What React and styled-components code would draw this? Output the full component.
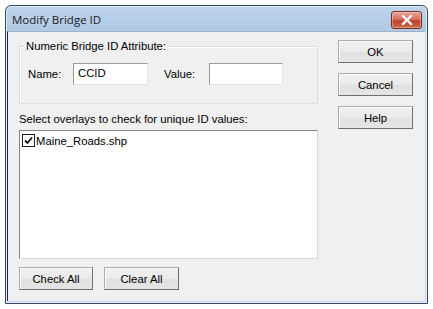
import React from 'react';
import styled, {createGlobalStyle} from 'styled-components';

const GlobalStyle = createGlobalStyle`
  html, body {
    margin: 0;
    padding: 0;
    background: #ffffff;
  }
  body {
    font-family: "Liberation Sans", Arial, sans-serif;
    font-size: 11.3px;
    color: #000;
  }
`;

const Page = styled.div`
  padding: 5px;
`;

const Window = styled.div`
  width: 421px;
  height: 297px;
  border: 1px solid #3a4656;
  border-radius: 6px 6px 0 0;
  background: linear-gradient(to bottom, #bed3ea 0px, #b0c9e4 26px, #c3d8ee 26px, #c3d8ee 100%);
  display: flex;
  flex-direction: column;
  box-shadow: inset 0 0 0 1px #e4eef8;
`;

const TitleBar = styled.div`
  height: 25px;
  display: flex;
  align-items: center;
  justify-content: space-between;
  padding: 0 5px 0 6px;
`;

const Title = styled.span`
  font-family: "Open Sans", "Noto Sans", sans-serif;
  font-size: 11.5px;
  color: #1b1b1b;
  margin-top: 1px;
`;

const CloseButton = styled.div`
  width: 29px;
  height: 16px;
  border: 1px solid #7a2a20;
  border-radius: 3px;
  background: linear-gradient(to bottom, #e6a296 0%, #d7705f 45%, #c0412c 55%, #cc6a4e 100%);
  display: flex;
  align-items: center;
  justify-content: center;
  margin-top: 2px;
  box-shadow: inset 0 0 0 1px rgba(255, 255, 255, 0.35);
`;

const Client = styled.div`
  flex: 1;
  margin: 0 2px 2px 1px;
  background: #f0f0f0;
  border-left: 1px solid #1f2a36;
  border-top: 1px solid #9fb4cb;
  display: flex;
  padding: 8px 12px 0 11px;
  gap: 20px;
`;

const LeftColumn = styled.div`
  width: 299px;
  display: flex;
  flex-direction: column;
`;

const RightColumn = styled.div`
  display: flex;
  flex-direction: column;
  gap: 10px;
`;

const GroupBox = styled.div`
  position: relative;
  margin-top: 6px;
  height: 58px;
  border: 1px solid #d5dfe5;
  box-shadow: inset 1px 1px 0 #ffffff;
  display: flex;
  align-items: flex-start;
  padding: 16px 0 0 8px;
  box-sizing: border-box;
`;

const GroupLabel = styled.span`
  position: absolute;
  top: -8px;
  left: 4px;
  padding: 0 2px;
  background: #f0f0f0;
  line-height: 14px;
`;

const FieldLabel = styled.span`
  width: ${p => p.$w}px;
  line-height: 22px;
`;

const TextBox = styled.div`
  width: ${p => p.$w}px;
  height: 22px;
  background: #ffffff;
  border-top: 1px solid #9a9a9a;
  border-left: 1px solid #9a9a9a;
  border-right: 1px solid #e3e3e3;
  border-bottom: 1px solid #e3e3e3;
  padding: 2px 0 0 4px;
  box-sizing: border-box;
  margin-right: ${p => p.$mr || 0}px;
  line-height: 15px;
`;

const Caption = styled.div`
  margin-top: 8px;
  line-height: 14px;
  height: 14px;
`;

const ListBox = styled.div`
  margin-top: 4px;
  height: 129px;
  background: #ffffff;
  border-top: 1px solid #828790;
  border-left: 1px solid #828790;
  border-right: 1px solid #d9d9d9;
  border-bottom: 1px solid #d9d9d9;
  box-sizing: border-box;
  padding: 2px 2px;
`;

const ListItem = styled.div`
  display: flex;
  align-items: center;
  gap: 1px;
  height: 15px;
`;

const CheckBox = styled.div`
  width: 13px;
  height: 13px;
  box-sizing: border-box;
  border: 1px solid #1c1c1c;
  background: #ffffff;
  display: flex;
  align-items: center;
  justify-content: center;
`;

const ButtonRow = styled.div`
  display: flex;
  gap: 11px;
  margin-top: 8px;
`;

const Button = styled.div`
  width: ${p => p.$w || 75}px;
  height: 23px;
  box-sizing: border-box;
  border: 1px solid #acacac;
  border-right-color: #6f6f6f;
  border-bottom-color: #6f6f6f;
  background: linear-gradient(to bottom, #f0f0f0 0%, #eaeaea 50%, #e0e0e0 51%, #e5e5e5 100%);
  box-shadow: inset 1px 1px 0 #fbfbfb;
  display: flex;
  align-items: center;
  justify-content: center;
`;

const App = () => (
  <Page>
    <GlobalStyle />
    <Window>
      <TitleBar>
        <Title>Modify Bridge ID</Title>
        <CloseButton>
          <svg width="12" height="10" viewBox="0 0 12 10">
            <path d="M2 1 L10 9 M10 1 L2 9" stroke="#ffffff" strokeWidth="2.4" strokeLinecap="square" />
          </svg>
        </CloseButton>
      </TitleBar>
      <Client>
        <LeftColumn>
          <GroupBox>
            <GroupLabel>Numeric Bridge ID Attribute:</GroupLabel>
            <FieldLabel $w={45}>Name:</FieldLabel>
            <TextBox $w={75} $mr={16}>CCID</TextBox>
            <FieldLabel $w={45}>Value:</FieldLabel>
            <TextBox $w={74} />
          </GroupBox>
          <Caption>Select overlays to check for unique ID values:</Caption>
          <ListBox>
            <ListItem>
              <CheckBox>
                <svg width="9" height="9" viewBox="0 0 9 9">
                  <path d="M1 4.5 L3.5 7 L8 1.5" stroke="#111" strokeWidth="1.8" fill="none" />
                </svg>
              </CheckBox>
              <span>Maine_Roads.shp</span>
            </ListItem>
          </ListBox>
          <ButtonRow>
            <Button $w={74}>Check All</Button>
            <Button $w={75}>Clear All</Button>
          </ButtonRow>
        </LeftColumn>
        <RightColumn>
          <Button>OK</Button>
          <Button>Cancel</Button>
          <Button>Help</Button>
        </RightColumn>
      </Client>
    </Window>
  </Page>
);

export default App;
